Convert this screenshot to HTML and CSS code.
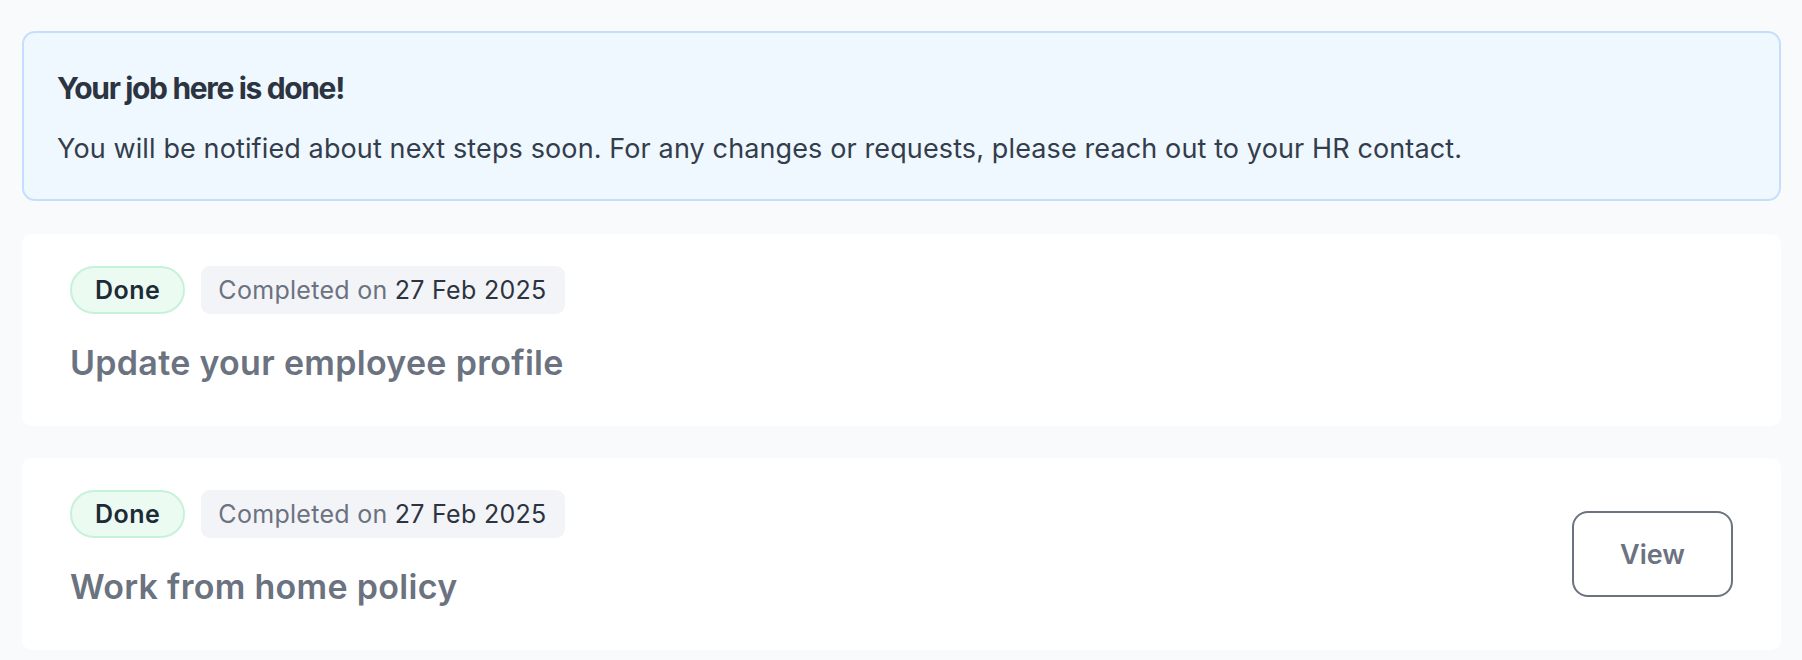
FILE: index.html
```html
<!DOCTYPE html>
<html lang="en">
<head>
<meta charset="utf-8">
<title>Tasks</title>
<link rel="stylesheet" href="styles.css">
</head>
<body>
<main class="page">
  <section class="notice">
    <h2 class="notice-title">Your job here is done!</h2>
    <p class="notice-text">You will be notified about next steps soon. For any changes or requests, please reach out to your HR contact.</p>
  </section>

  <article class="task">
    <div class="task-body">
      <div class="task-meta">
        <span class="status">Done</span>
        <span class="completed">Completed on <span class="date">27 Feb 2025</span></span>
      </div>
      <h3 class="task-title">Update your employee profile</h3>
    </div>
  </article>

  <article class="task">
    <div class="task-body">
      <div class="task-meta">
        <span class="status">Done</span>
        <span class="completed">Completed on <span class="date">27 Feb 2025</span></span>
      </div>
      <h3 class="task-title">Work from home policy</h3>
    </div>
    <button class="view-btn" type="button">View</button>
  </article>
</main>
</body>
</html>
```

FILE: styles.css
```css
* {
  box-sizing: border-box;
}

html, body {
  margin: 0;
  padding: 0;
  background: #f9fafb;
}

body {
  font-family: Inter, "Noto Sans", "Liberation Sans", sans-serif;
  color: #374151;
}

.page {
  display: flex;
  flex-direction: column;
  gap: 32px;
  padding: 31px 21px 0 22px;
}

.notice {
  background: #eff7ff;
  border: 2px solid #c3dffd;
  border-radius: 13px;
  padding: 37px 32px 31px 33px;
  margin-bottom: 1px;
}

.notice-title {
  margin: 0;
  font-size: 30px;
  line-height: 36px;
  font-weight: 700;
  letter-spacing: -0.045em;
  color: #2b3440;
}

.notice-text {
  margin: 23px 0 0;
  font-size: 27px;
  line-height: 39px;
  font-weight: 400;
  letter-spacing: 0.12px;
  color: #333d4b;
}

.task {
  display: flex;
  align-items: center;
  justify-content: space-between;
  background: #ffffff;
  border-radius: 10px;
  padding: 32px 48px 42px 48px;
}

.task-meta {
  display: flex;
  align-items: center;
  gap: 16px;
}

.status {
  display: inline-flex;
  align-items: center;
  height: 48px;
  padding: 0 23px;
  border: 2px solid #c8f1da;
  border-radius: 999px;
  background: #ebfbf2;
  color: #1f2a37;
  font-size: 25px;
  font-weight: 600;
  letter-spacing: 0.02em;
}

.completed {
  display: inline-flex;
  align-items: center;
  gap: 0.28em;
  height: 48px;
  padding: 0 18px 0 17px;
  border-radius: 9px;
  background: #f3f4f7;
  color: #6b7280;
  font-size: 25px;
  font-weight: 400;
  letter-spacing: 0.3px;
}

.date {
  color: #2b3440;
}

.task-title {
  margin: 28px 0 0;
  font-size: 34px;
  line-height: 42px;
  font-weight: 600;
  letter-spacing: 0.3px;
  color: #6b7280;
}

.view-btn {
  display: inline-flex;
  align-items: center;
  justify-content: center;
  width: 161px;
  height: 86px;
  margin-top: 10px;
  padding: 0;
  background: #ffffff;
  border: 2px solid #6b7280;
  border-radius: 16px;
  color: #6b7280;
  font-family: Inter, "Noto Sans", "Liberation Sans", sans-serif;
  font-size: 27px;
  font-weight: 600;
  cursor: pointer;
}
```
